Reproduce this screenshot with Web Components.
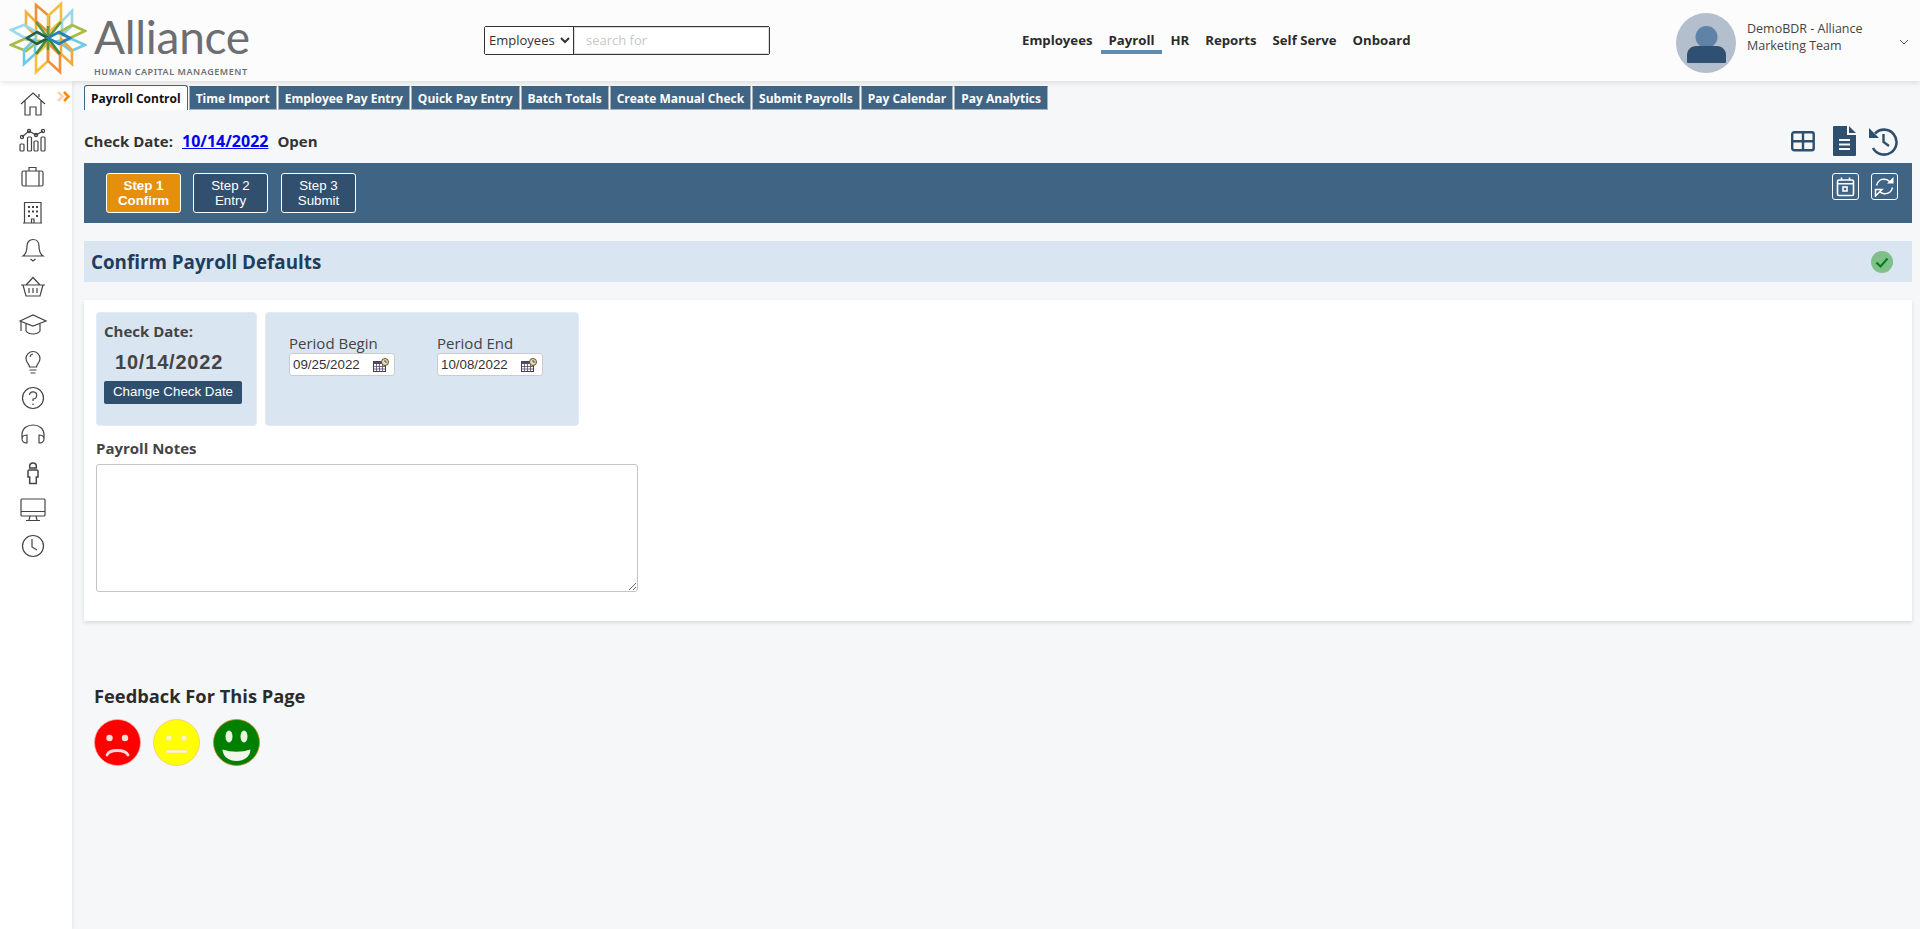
<!DOCTYPE html>
<html lang="en">
<head>
<meta charset="utf-8">
<title>Payroll Control</title>
<style>
    html, body { margin: 0; height: 100%; }
    body { background: #f6f7f9; font-family: "Open Sans", "Liberation Sans", sans-serif; color: #333; overflow: hidden; }
</style>
</head>
<body>
<app-shell>
    <app-header slot="header"></app-header>
    <side-nav slot="side"></side-nav>
    <tab-strip active="Payroll Control">Payroll Control|Time Import|Employee Pay Entry|Quick Pay Entry|Batch Totals|Create Manual Check|Submit Payrolls|Pay Calendar|Pay Analytics</tab-strip>
    <check-row date="10/14/2022" state="Open"></check-row>
    <step-bar></step-bar>
    <section-head>Confirm Payroll Defaults</section-head>
    <payroll-card></payroll-card>
    <feedback-faces></feedback-faces>
</app-shell>

<script>
class AppShell extends HTMLElement {
    constructor() {
        super();
        this.attachShadow({mode: 'open'}).innerHTML = `
        <style>
            :host { display: grid; grid-template-columns: 72px 1fr; grid-template-rows: 81px 1fr; height: 100vh; }
            .head { grid-column: 1 / 3; position: relative; z-index: 2; }
            .side { position: relative; z-index: 1; }
            main { padding: 4px 8px 0 12px; min-width: 0; }
        </style>
        <div class="head"><slot name="header"></slot></div>
        <div class="side"><slot name="side"></slot></div>
        <main><slot></slot></main>`;
    }
}

class AppHeader extends HTMLElement {
    constructor() {
        super();
        this.attachShadow({mode: 'open'}).innerHTML = `
        <style>
            :host { display: flex; height: 81px; background: #fcfcfc; box-shadow: 0 2px 5px rgba(0,0,0,.1); align-items: center; }
            .logo { display: flex; width: 484px; flex: none; height: 81px; }
            .logo svg { margin-left: 9px; flex: none; }
            .word { margin-left: 7px; color: #6d6e71; font-family: Lato, "Noto Sans", sans-serif; }
            .word b { display: block; font-weight: 400; font-size: 46px; line-height: 46px; margin-top: 14px; letter-spacing: -.3px; }
            .word small { display: block; font-family: "Noto Sans", "Open Sans", sans-serif; font-size: 9px; line-height: 11px; letter-spacing: .55px; font-weight: 600; margin-top: 5.5px; white-space: nowrap; }
            .search { display: flex; width: 286px; height: 29px; box-sizing: border-box; border: 1px solid #333; border-radius: 2px; flex: none; margin-top: -1px; background: #fff; }
            select { width: 89px; border: 0; border-right: 1px solid #333; background: #fff; font: 13px "Open Sans", sans-serif; color: #333; padding: 0; outline: 0; }
            input { flex: 1; min-width: 0; border: 1px solid #ddd; font: 13px "Open Sans", sans-serif; padding: 0 10px 0 11px; outline: 0; }
            input::placeholder { color: #c8c8c8; }
            nav { display: flex; gap: 16px; margin-left: 252px; flex: none; align-self: stretch; }
            a { font-size: 13.2px; font-weight: 700; color: #2b2b2b; line-height: 81px; height: 81px; position: relative; white-space: nowrap; }
            a.on::after { content: ""; position: absolute; left: -8px; right: -8px; top: 50px; height: 4px; background: #5f8bae; }
            .user { margin-left: auto; display: flex; align-items: center; width: 244px; flex: none; }
            .user > svg:first-child { margin-top: 5px; }
            .who { font-size: 12.5px; line-height: 17px; color: #444; margin-left: 11px; width: 140px; margin-top: -7px; }
            .caret { margin-left: 12px; margin-top: 2px; }
        </style>
        <div class="logo">
            <svg width="78" height="76" viewBox="0 0 78 76" style="margin-top:1px">
                <g fill="none" stroke-width="2.6" stroke-linejoin="miter" transform="translate(-9,-1)">
                    <path d="M26 12L36 22V36L26 26Z" stroke="#efb23c"/>
                    <path d="M72 11L62 21V35L72 26Z" stroke="#9ad6e8"/>
                    <path d="M36 5L49 16V33L36 21Z" stroke="#ef8f3a"/>
                    <path d="M61 4L48 16V33L61 21Z" stroke="#f5bd3c"/>
                    <path d="M11 30L24 25L39 33L25 38Z" stroke="#9ad9ee"/>
                    <path d="M85 31L72 25L58 33L70 38Z" stroke="#a7bb45"/>
                    <path d="M11 45L24 39L39 41L26 51Z" stroke="#a7bb45"/>
                    <path d="M85 45L72 39L58 41L71 51Z" stroke="#6dc9e6"/>
                    <path d="M24 64L35 54V39L24 50Z" stroke="#6dc9e6"/>
                    <path d="M72 64L61 54V39L72 50Z" stroke="#efab3a"/>
                    <path d="M36 72L48 61V43L36 55Z" stroke="#f5bd3c"/>
                    <path d="M60 72L48 61V43L60 55Z" stroke="#ef8f3a"/>
                    <path d="M48 26V50M36 22L48 38L61 22" stroke="#5c9a3c"/>
                    <path d="M36 54L48 38L60 54" stroke="#3d8c3a"/>
                    <path d="M27 38L37 32L48 38L37 44Z" stroke="#1f5f4a"/>
                    <path d="M48 38L59 32L70 38L59 44Z" stroke="#2a7fb8"/>
                </g>
            </svg>
            <div class="word"><b>Alliance</b><small>HUMAN CAPITAL MANAGEMENT</small></div>
        </div>
        <div class="search">
            <select><option>Employees</option></select>
            <input placeholder="search for">
        </div>
        <nav>
            <a>Employees</a><a class="on">Payroll</a><a>HR</a><a>Reports</a><a>Self Serve</a><a>Onboard</a>
        </nav>
        <div class="user">
            <svg width="60" height="60" viewBox="0 0 60 60">
                <circle cx="30" cy="30" r="30" fill="#b3bfcc"/>
                <circle cx="30.5" cy="24" r="11" fill="#5f83a6"/>
                <path d="M11 49V42C11 37 15 33 20 33H41C46 33 50 37 50 42V49Q50 50 49 50H12Q11 50 11 49Z" fill="#2f5070"/>
            </svg>
            <div class="who">DemoBDR - Alliance Marketing Team</div>
            <svg class="caret" width="10" height="6" viewBox="0 0 10 6"><path d="M1 1L5 5L9 1" fill="none" stroke="#555" stroke-width="1"/></svg>
        </div>`;
    }
}

// sidebar icons, all drawn on a 30x30 box
const SIDE_ICONS = [
    '<path d="M3 15L15 4L27 15M7 12V26H12V18H18V26H23V12M21 5V8"/>',
    '<path d="M4 11L11 5L18 9L25 5"/><circle cx="4" cy="11" r="1.6"/><circle cx="11" cy="5" r="1.6"/><circle cx="18" cy="9" r="1.6"/><circle cx="25" cy="5" r="1.6"/><rect x="2" y="18" width="4" height="7" rx="1"/><rect x="9.500" y="11" width="4" height="14" rx="1"/><rect x="16" y="15" width="4" height="10" rx="1"/><rect x="23" y="11" width="4" height="14" rx="1"/>',
    '<rect x="4" y="8" width="21" height="15" rx="1.500"/><path d="M11 8V4.500H18V8M8 8V23M21 8V23"/>',
    '<path d="M6.500 3.500H23V24H6.500ZM5 24H24M13.500 24V20H16V24"/><path stroke-width="2.200" d="M10 8h2M14 8h2M18 8h2M10 12.500h2M14 12.500h2M18 12.500h2M10 17h2M18 17h2"/>',
    '<path d="M5 20C8 18 9 15 9 10C9 6 11.500 3.500 15 3.500C18.500 3.500 21 6 21 10C21 15 22 18 25 20ZM12.500 23L15 25L17.500 23"/>',
    '<path d="M3 12H27M5 12L8 23H22L25 12M8 12L15 4.500L22 12M11 15V20M15 15V20M19 15V20"/>',
    '<path d="M2 11L15 5L28 11L15 16ZM8 14V21C11 25 19 25 22 21V14M3 12V21"/>',
    '<path d="M11.500 20C11.500 17 8 16 8 11.500A7 7 0 0 1 22 11.500C22 16 18.500 17 18.500 20ZM11.500 23H18.500M12.500 26H17.500M12 10A3.500 3.500 0 0 1 15 7"/>',
    '<circle cx="15" cy="15" r="10.500"/><path d="M11.500 12A3.600 3.600 0 1 1 15 16V18M15 20.500V22"/>',
    '<path d="M4 19V15C4 8.500 9 5 15 5C21 5 26 8.500 26 15V19M4 19C4 16 7 15 9 15V23C7 23 4 22 4 19ZM26 19C26 16 23 15 21 15V23C23 23 26 22 26 19Z"/>',
    '<path stroke-width="1.500" d="M15 6A3.300 3.300 0 0 1 18.300 9.300V11H11.700V9.300A3.300 3.300 0 0 1 15 6ZM11.200 13H18.800Q20 13 20 14V20H18.300V26.500H11.700V20H10V14Q10 13 11.200 13Z"/>',
    '<rect x="3" y="5" width="24" height="17" rx="1"/><path d="M3 17.500H27M12 22L11 26M18 22L19 26M8 26.500H22"/>',
    '<circle cx="15" cy="15" r="10.500"/><path d="M14 8V16L19 19"/>'
];

class SideNav extends HTMLElement {
    constructor() {
        super();
        const items = SIDE_ICONS.map(p => `<svg width="30" height="30" viewBox="0 0 30 30">${p}</svg>`).join('');
        this.attachShadow({mode: 'open'}).innerHTML = `
        <style>
            :host { display: flex; flex-direction: column; align-items: center; gap: 6.8px; width: 72px; height: 100%; box-sizing: border-box; padding: 8px 6px 0 0; background: #fff; box-shadow: 1px 0 4px rgba(0,0,0,.08); position: relative; }
            svg { fill: none; stroke: #444; stroke-width: 1.2; flex: none; }
            .more { position: absolute; left: 57px; top: 10px; }
        </style>
        ${items}
        <svg class="more" width="13" height="12" viewBox="0 0 13 12" style="stroke:none">
            <path d="M1 1L5.500 5.500L1 10" fill="none" stroke="#fcd4ae" stroke-width="2.600"/>
            <path d="M7 1L11.500 5.500L7 10" fill="none" stroke="#ff8a00" stroke-width="2.600"/>
        </svg>`;
    }
}

class TabStrip extends HTMLElement {
    connectedCallback() {
        if (this.shadowRoot) return;
        const active = this.getAttribute('active');
        const tabs = this.textContent.trim().split('|');
        this.attachShadow({mode: 'open'}).innerHTML = `
        <style>
            :host { display: flex; gap: 1px; height: 25px; align-items: flex-end; font-size: 12px; font-weight: 700; }
            span { box-sizing: border-box; height: 24px; line-height: 24px; padding: 0 6px; background: #3f6484; color: #fff; border: 1px solid #a8b0b8; border-top-color: #3f6484; white-space: nowrap; }
            span.on { height: 25px; line-height: 26px; background: #fff; color: #111; border: 1px solid #3f6484; border-bottom: 0; border-radius: 3px 3px 0 0; }
        </style>
        ${tabs.map(t => `<span class="${t === active ? 'on' : ''}">${t}</span>`).join('')}`;
    }
}

class CheckRow extends HTMLElement {
    constructor() {
        super();
        this.attachShadow({mode: 'open'}).innerHTML = `
        <style>
            :host { display: flex; align-items: center; height: 53px; font-size: 15px; font-weight: 700; color: #333; padding-top: 9px; box-sizing: border-box; }
            a { color: #0000ee; text-decoration: underline; margin: 0 9px; font-size: 16px; }
            .tools { margin-left: auto; display: flex; align-items: center; margin-right: 14px; margin-top: -1px; }
        </style>
        <span>Check Date:</span>
        <a>${this.getAttribute('date')}</a>
        <span>${this.getAttribute('state')}</span>
        <div class="tools">
            <svg width="24" height="22" viewBox="0 0 24 22" style="margin-right:18px">
                <rect x="1.200" y="2.200" width="21.500" height="18" rx="2" fill="none" stroke="#2f4f6f" stroke-width="2.400"/>
                <path d="M1 11.200H23M12 2V20" stroke="#2f4f6f" stroke-width="2.400"/>
            </svg>
            <svg width="23" height="30" viewBox="0 0 23 30" style="margin-right:12px">
                <path d="M1 0Q0 0 0 1V29Q0 30 1 30H22Q23 30 23 29V9H14V0ZM16 0V7H23Z" fill="#2f4f6f"/>
                <path d="M6 14H17M6 18.500H17M6 23H17" stroke="#f6f7f9" stroke-width="2"/>
            </svg>
            <svg width="30" height="30" viewBox="0 0 30 30">
                <path d="M7 7.500A12.500 12.500 0 1 1 5 22" fill="none" stroke="#2f4f6f" stroke-width="2.600"/>
                <path d="M1 2L1 12L11 12Z" fill="#2f4f6f"/>
                <path d="M15.500 8V16L21 20" fill="none" stroke="#2f4f6f" stroke-width="2.400"/>
            </svg>
        </div>`;
    }
}

class StepBar extends HTMLElement {
    constructor() {
        super();
        this.attachShadow({mode: 'open'}).innerHTML = `
        <style>
            :host { display: flex; height: 60px; box-sizing: border-box; padding: 10px 14px 0 22px; background: #3f6484; font: 13.33px/15px "Liberation Sans", Arial, sans-serif; color: #fff; }
            .step { box-sizing: border-box; width: 75px; height: 40px; margin-right: 12px; background: #31506f; border: 1px solid #fff; border-radius: 3px; text-align: center; padding-top: 4px; }
            .step + .step + .step { margin-left: 1px; }
            .step.on { background: #e5900d; font-weight: 700; }
            .end { margin-left: auto; display: flex; gap: 12px; }
            .box { box-sizing: border-box; width: 27px; height: 27px; border: 1px solid #fff; border-radius: 3px; display: flex; align-items: center; justify-content: center; }
        </style>
        <div class="step on">Step 1<br>Confirm</div>
        <div class="step">Step 2<br>Entry</div>
        <div class="step">Step 3<br>Submit</div>
        <div class="end">
            <div class="box">
                <svg width="19" height="20" viewBox="0 0 19 20" fill="none" stroke="#fff" stroke-width="1.600">
                    <rect x="1.500" y="3" width="16" height="15.500" rx="1.500"/>
                    <path d="M1.500 6.800H17.500M5.500 .5V3.500M13.500 .5V3.500"/>
                    <rect x="7" y="10" width="4" height="4"/>
                </svg>
            </div>
            <div class="box">
                <svg width="21" height="21" viewBox="0 0 21 21" fill="none" stroke="#fff" stroke-width="1.500">
                    <path d="M2.500 9.500C3.500 5 7 2.800 11 3.300C13 3.500 14.500 4.500 15.500 5.500M18.500 11.500C17.500 16 14 18.200 10 17.700C8 17.500 6.500 16.500 5.500 15.500"/>
                    <path d="M19.500 1L19.500 7.500L13 7.500Z" fill="#fff" stroke="none"/>
                    <path d="M1.500 20L1.500 13.500L8 13.500Z" fill="#3f6484"/>
                </svg>
            </div>
        </div>`;
    }
}

class SectionHead extends HTMLElement {
    constructor() {
        super();
        this.attachShadow({mode: 'open'}).innerHTML = `
        <style>
            :host { display: flex; align-items: center; height: 41px; margin-top: 18px; padding: 0 19px 0 7px; background: #d9e5f1; font-size: 18.8px; font-weight: 700; color: #1f3d5c; }
            span { padding-top: 1px; }
            svg { margin-left: auto; }
        </style>
        <span><slot></slot></span>
        <svg width="22" height="22" viewBox="0 0 22 22">
            <circle cx="11" cy="11" r="11" fill="#7fc088"/>
            <path d="M5.500 11.500L9.500 15.500L16.500 7.500" fill="none" stroke="#0a7d1e" stroke-width="2.200"/>
        </svg>`;
    }
}

// small calendar with clock, used on both period inputs
const CAL_ICON = `<svg width="16" height="14" viewBox="0 0 16 14">
    <rect x=".5" y="3.500" width="12" height="10" fill="#fff" stroke="#443a55"/>
    <rect x=".5" y="3.500" width="12" height="2.500" fill="#55486a"/>
    <path d="M3.500 6V13.500M6.500 6V13.500M9.500 6V13.500M1 8.500H12M1 11H12" stroke="#55486a" stroke-width=".8"/>
    <circle cx="12" cy="4" r="3.500" fill="#e8dcb0" stroke="#5a5030"/>
    <path d="M12 2V4H14" fill="none" stroke="#333" stroke-width=".8"/>
</svg>`;

class DateField extends HTMLElement {
    constructor() {
        super();
        this.attachShadow({mode: 'open'}).innerHTML = `
        <style>
            :host { display: block; width: 106px; font-size: 15px; line-height: 19px; color: #444; white-space: nowrap; }
            .field { box-sizing: border-box; display: flex; align-items: center; justify-content: space-between; height: 23px; width: 106px; background: #fff; border: 1px solid #ccc; border-radius: 3px; padding: 0 5px 0 3px; font: 13.33px "Liberation Sans", Arial, sans-serif; color: #333; }
        </style>
        <div>${this.getAttribute('label')}</div>
        <div class="field"><span>${this.getAttribute('value')}</span>${CAL_ICON}</div>`;
    }
}

class PayrollCard extends HTMLElement {
    constructor() {
        super();
        this.attachShadow({mode: 'open'}).innerHTML = `
        <style>
            :host { display: block; height: 321px; box-sizing: border-box; margin-top: 18px; padding: 12px; background: #fff; box-shadow: 0 2px 4px rgba(0,0,0,.12); color: #444; }
            .row { display: flex; gap: 8px; height: 114px; }
            .panel { background: #d9e5f1; border-radius: 4px; box-sizing: border-box; border: 1px solid #e2eaf3; }
            .check { width: 161px; padding: 9px 7px; }
            .check h4 { margin: 0; font-size: 15px; line-height: 19px; font-weight: 700; }
            .check .d { font: 700 20px/24px "Liberation Sans", Arial, sans-serif; letter-spacing: .8px; padding-left: 11px; margin-top: 9px; }
            .check .btn { box-sizing: border-box; height: 23px; width: 138px; margin-top: 7px; background: #2f4f6f; border-radius: 2px; color: #fff; text-align: center; font: 13.33px/22px "Liberation Sans", Arial, sans-serif; }
            .period { width: 314px; padding: 21px 23px; display: flex; gap: 43px; align-items: flex-start; }
            .period date-field + date-field { margin-left: -1px; }
            h5 { margin: 13px 0 6px; font-size: 15px; line-height: 19px; font-weight: 700; }
            textarea { display: block; box-sizing: border-box; width: 542px; height: 128px; border: 1px solid #c4c4c4; border-radius: 3px; background: #fff; outline: 0; }
        </style>
        <div class="row">
            <div class="panel check">
                <h4>Check Date:</h4>
                <div class="d">10/14/2022</div>
                <div class="btn">Change Check Date</div>
            </div>
            <div class="panel period">
                <date-field label="Period Begin" value="09/25/2022"></date-field>
                <date-field label="Period End" value="10/08/2022"></date-field>
            </div>
        </div>
        <h5>Payroll Notes</h5>
        <textarea></textarea>`;
    }
}

class FeedbackFaces extends HTMLElement {
    constructor() {
        super();
        this.attachShadow({mode: 'open'}).innerHTML = `
        <style>
            :host { display: block; padding: 63px 0 0 10px; }
            h3 { margin: 0 0 11px; font-size: 18.3px; line-height: 24px; font-weight: 700; color: #2b2b2b; }
            .faces { display: flex; gap: 12px; }
            svg:last-child { margin-left: 1px; }
        </style>
        <h3>Feedback For This Page</h3>
        <div class="faces">
            <svg width="47" height="47" viewBox="0 0 47 47">
                <circle cx="23.500" cy="23.500" r="23" fill="#ff0000" stroke="#f8a9a0" stroke-width=".7"/>
                <circle cx="15.500" cy="19" r="3.200" fill="#ffd9d9"/><circle cx="31" cy="19" r="3.200" fill="#ffd9d9"/>
                <path d="M13 36C15.500 30 31 30 34 36" fill="none" stroke="#ffd9d9" stroke-width="2.800" stroke-linecap="round"/>
            </svg>
            <svg width="47" height="47" viewBox="0 0 47 47">
                <circle cx="23.500" cy="23.500" r="23" fill="#ffff00" stroke="#f5c878" stroke-width=".8"/>
                <circle cx="16" cy="19" r="3" fill="#fff8b0" stroke="#f0d890" stroke-width=".5"/><circle cx="31" cy="19" r="3" fill="#fff8b0" stroke="#f0d890" stroke-width=".5"/>
                <rect x="13" y="31" width="21" height="3" fill="#fff8c8" stroke="#f0d890" stroke-width=".5"/>
            </svg>
            <svg width="47" height="47" viewBox="0 0 47 47">
                <circle cx="23.500" cy="23.500" r="23" fill="#008000" stroke="#c8862a" stroke-width=".8"/>
                <ellipse cx="16" cy="17.500" rx="3.500" ry="6" fill="#e8f5e0"/><ellipse cx="31" cy="17.500" rx="3.500" ry="6" fill="#e8f5e0"/>
                <path d="M9.500 30.500Q23.500 35 37.500 30.500C37 38 31 42 23.500 42C16 42 10 38 9.500 30.500Z" fill="#f2f7ea"/>
            </svg>
        </div>`;
    }
}

customElements.define('app-shell', AppShell);
customElements.define('app-header', AppHeader);
customElements.define('side-nav', SideNav);
customElements.define('tab-strip', TabStrip);
customElements.define('check-row', CheckRow);
customElements.define('step-bar', StepBar);
customElements.define('section-head', SectionHead);
customElements.define('date-field', DateField);
customElements.define('payroll-card', PayrollCard);
customElements.define('feedback-faces', FeedbackFaces);
</script>
</body>
</html>
